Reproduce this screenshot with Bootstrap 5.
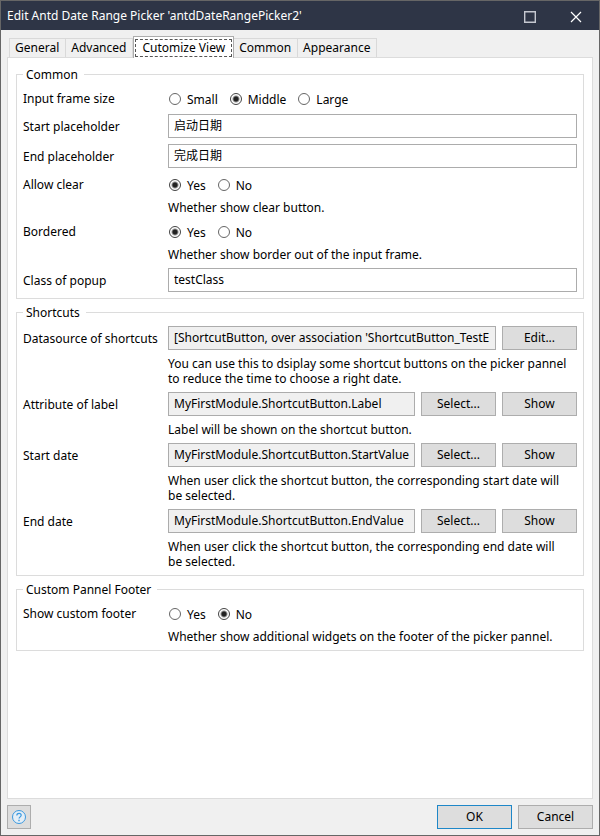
<!DOCTYPE html>
<html lang="en">
<head>
<meta charset="utf-8">
<meta name="viewport" content="width=device-width, initial-scale=1">
<title>Edit Antd Date Range Picker</title>
<link href="https://cdn.jsdelivr.net/npm/bootstrap@5.3.0/dist/css/bootstrap.min.css" rel="stylesheet">
<style>
  body { font-family: "Noto Sans", "Noto Sans CJK SC", sans-serif; font-size: 12px; line-height: 15px; color: #000; background: #f0f0f0; }
  .dialog { border: 1px solid #666; }
  .titlebar { height: 29px; background: #2e3546; color: #fff; padding-left: 6px; }
  .titlebar button { width: 46px; height: 29px; border: 0; background: none; color: #fff; padding: 0; }
  .dialog-tabs { padding: 6px 1px 0; border: 0; }
  .dialog-tabs .nav-link { height: 19px; padding: 0 6px 0 5px; line-height: 18px; border: 1px solid #d9d9d9; border-width: 1px 1px 0 0; border-radius: 0; margin: 0; color: #000; background: #f0f0f0; }
  .dialog-tabs .nav-item:first-child .nav-link { border-left-width: 1px; }
  .dialog-tabs .nav-link.active { position: relative; height: 22px; margin-bottom: -1px; padding: 1px; border: 1px solid #acacac; border-bottom: 0; background: #fff; color: #000; }
  .dialog-tabs .nav-link.active span { display: block; height: 18px; line-height: 15px; padding: 0 6px; border: 1px dashed #555; }
  .sheet { margin: 0 6px; padding: 9px 8px; border: 1px solid #dcdcdc; background: #fff; }
  .group { border: 1px solid #dcdcdc; padding: 6px 6px 0; margin-bottom: 6px; }
  .group legend { float: none; width: auto; font-size: 12px; line-height: 15px; padding: 0 6px 0 3px; margin: 0; }
  .prop { display: grid; grid-template-columns: 145px minmax(0, 1fr); }
  .prop > .name { align-self: center; white-space: nowrap; margin-bottom: 6px; }
  .prop > .line { min-height: 24px; margin-bottom: 6px; gap: 6px; }
  .prop > .radios { min-height: 22px; margin-bottom: 4px; gap: 11px; }
  .prop > .hint { grid-column: 2; margin: 0 0 6px; padding-right: 8px; }
  .radios label { display: flex; align-items: center; gap: 6px; }
  .radios input { margin: 0 0 0 1px; }
  .radios .form-check-input { float: none; width: 12px; height: 12px; border: 1px solid #666; background: #fff; }
  .radios .form-check-input:checked { background: radial-gradient(circle, #222 0 2px, #fff 4px); border-color: #444; }
  .field { height: 24px; padding: 0 3px 2px 5px; border: 1px solid #acacac; border-radius: 0; font-size: 12px; line-height: 15px; color: #000; background: #fff; }
  .field[readonly] { background: #f0f0f0; }
  .push { width: 75px; height: 24px; flex: none; padding: 0 0 2px; border: 1px solid #adadad; border-radius: 0; background: #ddd; color: #000; font-size: 12px; line-height: 15px; }
  .push.primary { border-color: #1e87c8; }
  .push.help { width: 24px; padding: 0; color: #3b99e0; }
  .actions { padding: 6px; gap: 6px; }
</style>
<script src="https://cdn.jsdelivr.net/npm/bootstrap@5.3.0/dist/js/bootstrap.bundle.min.js"></script>
</head>
<body>
<form class="dialog min-vh-100 d-flex flex-column">
  <header class="titlebar d-flex align-items-center">
    <span class="flex-grow-1">Edit Antd Date Range Picker 'antdDateRangePicker2'</span>
    <button type="button" aria-label="Maximize"><svg width="12" height="12" viewBox="0 0 12 12" fill="none" stroke="#c5c8d0" stroke-width="1.400"><path d="M.7.7h10.600v10.600H.7z"/></svg></button>
    <button type="button" aria-label="Close"><svg width="12" height="12" viewBox="0 0 12 12" fill="none" stroke="#fff" stroke-width="1.200"><path d="M1 1l10 10M11 1L1 11"/></svg></button>
  </header>

  <ul class="nav nav-tabs dialog-tabs align-items-end px-2" role="tablist">
    <li class="nav-item" role="presentation"><button class="nav-link" type="button" role="tab">General</button></li>
    <li class="nav-item" role="presentation"><button class="nav-link" type="button" role="tab">Advanced</button></li>
    <li class="nav-item" role="presentation"><button class="nav-link active" type="button" role="tab" aria-selected="true"><span>Cutomize View</span></button></li>
    <li class="nav-item" role="presentation"><button class="nav-link" type="button" role="tab">Common</button></li>
    <li class="nav-item" role="presentation"><button class="nav-link" type="button" role="tab">Appearance</button></li>
  </ul>

  <main class="sheet flex-grow-1">
    <fieldset class="group">
      <legend>Common</legend>
      <div class="prop">
        <span class="name">Input frame size</span>
        <div class="radios d-flex align-items-center">
          <label><input class="form-check-input" type="radio" name="size">Small</label>
          <label><input class="form-check-input" type="radio" name="size" checked>Middle</label>
          <label><input class="form-check-input" type="radio" name="size">Large</label>
        </div>
      </div>
      <div class="prop">
        <label class="name" for="startPh">Start placeholder</label>
        <div class="line d-flex"><input class="form-control field" id="startPh" type="text" value="启动日期"></div>
      </div>
      <div class="prop">
        <label class="name" for="endPh">End placeholder</label>
        <div class="line d-flex"><input class="form-control field" id="endPh" type="text" value="完成日期"></div>
      </div>
      <div class="prop">
        <span class="name">Allow clear</span>
        <div class="radios d-flex align-items-center">
          <label><input class="form-check-input" type="radio" name="clear" checked>Yes</label>
          <label><input class="form-check-input" type="radio" name="clear">No</label>
        </div>
        <p class="hint">Whether show clear button.</p>
      </div>
      <div class="prop">
        <span class="name">Bordered</span>
        <div class="radios d-flex align-items-center">
          <label><input class="form-check-input" type="radio" name="bordered" checked>Yes</label>
          <label><input class="form-check-input" type="radio" name="bordered">No</label>
        </div>
        <p class="hint">Whether show border out of the input frame.</p>
      </div>
      <div class="prop">
        <label class="name" for="popup">Class of popup</label>
        <div class="line d-flex"><input class="form-control field" id="popup" type="text" value="testClass"></div>
      </div>
    </fieldset>

    <fieldset class="group">
      <legend>Shortcuts</legend>
      <div class="prop">
        <label class="name" for="source">Datasource of shortcuts</label>
        <div class="line d-flex">
          <input class="form-control field" id="source" type="text" readonly value="[ShortcutButton, over association 'ShortcutButton_TestE">
          <button class="btn push" type="button">Edit...</button>
        </div>
        <p class="hint">You can use this to dsiplay some shortcut buttons on the picker pannel to reduce the time to choose a right date.</p>
      </div>
      <div class="prop">
        <label class="name" for="labelAttr">Attribute of label</label>
        <div class="line d-flex">
          <input class="form-control field" id="labelAttr" type="text" readonly value="MyFirstModule.ShortcutButton.Label">
          <button class="btn push" type="button">Select...</button>
          <button class="btn push" type="button">Show</button>
        </div>
        <p class="hint">Label will be shown on the shortcut button.</p>
      </div>
      <div class="prop">
        <label class="name" for="startDate">Start date</label>
        <div class="line d-flex">
          <input class="form-control field" id="startDate" type="text" readonly value="MyFirstModule.ShortcutButton.StartValue">
          <button class="btn push" type="button">Select...</button>
          <button class="btn push" type="button">Show</button>
        </div>
        <p class="hint">When user click the shortcut button, the corresponding start date will be selected.</p>
      </div>
      <div class="prop">
        <label class="name" for="endDate">End date</label>
        <div class="line d-flex">
          <input class="form-control field" id="endDate" type="text" readonly value="MyFirstModule.ShortcutButton.EndValue">
          <button class="btn push" type="button">Select...</button>
          <button class="btn push" type="button">Show</button>
        </div>
        <p class="hint">When user click the shortcut button, the corresponding end date will be selected.</p>
      </div>
    </fieldset>

    <fieldset class="group">
      <legend>Custom Pannel Footer</legend>
      <div class="prop">
        <span class="name">Show custom footer</span>
        <div class="radios d-flex align-items-center">
          <label><input class="form-check-input" type="radio" name="footer">Yes</label>
          <label><input class="form-check-input" type="radio" name="footer" checked>No</label>
        </div>
        <p class="hint">Whether show additional widgets on the footer of the picker pannel.</p>
      </div>
    </fieldset>
  </main>

  <footer class="actions d-flex">
    <button class="btn push help me-auto d-flex align-items-center justify-content-center" type="button" aria-label="Help">
      <svg width="16" height="16" viewBox="0 0 16 16" fill="none" stroke="currentColor"><circle cx="8" cy="8" r="6.500" fill="#e4eef6"/><path d="M5.800 6.400c0-1.400 1-2.100 2.200-2.100s2.200.8 2.200 2c0 1.600-2.100 1.600-2.100 3.300" stroke-width="1.200"/><path d="M8 10.800v1.400" stroke-width="1.400"/></svg>
    </button>
    <button class="btn push primary" type="submit">OK</button>
    <button class="btn push" type="button">Cancel</button>
  </footer>
</form>
</body>
</html>
